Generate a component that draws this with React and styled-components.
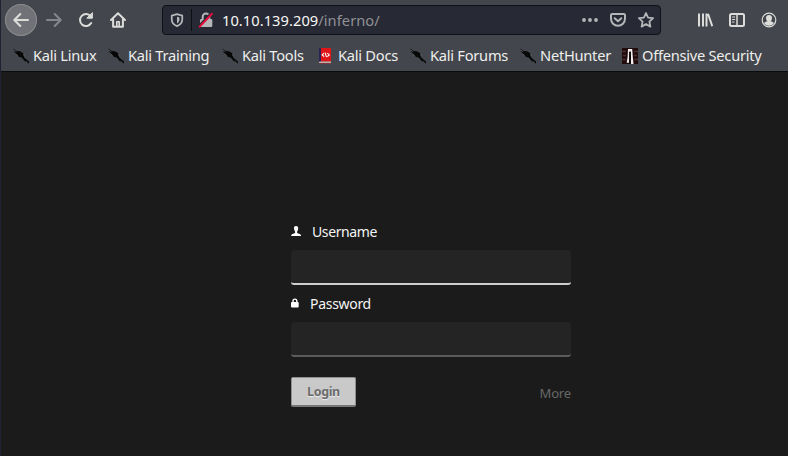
import React from "react";
import styled, { createGlobalStyle } from "styled-components";

const GlobalStyle = createGlobalStyle`
  * { box-sizing: border-box; }
  body { margin: 0; background: #1b1b1b; }
  button, input { font: inherit; }
`;
const Browser = styled.div`
  width: 788px;
  height: 456px;
  overflow: hidden;
  display: flex;
  flex-direction: column;
  background: #1b1b1b;
  border-left: 1px solid #1f2230;
  font-family: "Noto Sans", sans-serif;
  color: #eeeeec;
`;
const Toolbar = styled.header`
  height: 40px;
  flex: none;
  display: flex;
  align-items: center;
  background: #43464d;
  padding-left: 4px;
`;
const NavButton = styled.button`
  width: ${(p) => p.$w || 32}px;
  height: 32px;
  flex: none;
  padding: 0;
  border: 0;
  background: transparent;
  display: flex;
  align-items: center;
  justify-content: center;
  color: ${(p) => (p.$dim ? "#85878c" : "#dcdcd9")};
`;
const BackButton = styled(NavButton)`
  background: #717277;
  box-shadow: inset 0 0 0 1px #8a8a8d;
  border-radius: 50%;
`;
const AddressBar = styled.div`
  width: 499px;
  height: 30px;
  margin-left: 28px;
  flex: none;
  display: flex;
  align-items: center;
  background: #272935;
  border: 1px solid #101116;
  border-radius: 4px;
  color: #b5b6b8;
`;
const AddressIcon = styled.span`
  display: flex;
  justify-content: center;
  width: 28px;
`;
const Separator = styled.span`
  width: 1px;
  height: 22px;
  background: #0e0f15;
`;
const Url = styled.div`
  flex: 1;
  padding-left: 2px;
  font-size: 14.67px;
  line-height: 20px;
  letter-spacing: 0.05px;
  color: #909196;
`;
const Host = styled.span`
  color: #f8f8f5;
`;
const WindowTools = styled.div`
  display: flex;
  margin-left: 28px;
`;
const Bookmarks = styled.nav`
  height: 32px;
  flex: none;
  display: flex;
  background: #43464d;
  border-bottom: 1px solid #0b0b0d;
  padding-left: 12px;
`;
const Bookmark = styled.div`
  width: ${(p) => p.$w}px;
  flex: none;
  display: flex;
  align-items: center;
  gap: 4px;
  font-size: 14.67px;
  line-height: 20px;
  letter-spacing: -0.26px;
  white-space: nowrap;
  svg { flex: none; }
`;
const BookmarkName = styled.span`
  padding-bottom: 2px;
`;
const Page = styled.main`
  flex: 1;
  padding: 150px 0 0 290px;
`;
const LoginForm = styled.form`
  width: 280px;
`;
const Field = styled.label`
  display: block;
  height: 72px;
`;
const FieldLabel = styled.span`
  height: 28px;
  display: flex;
  align-items: flex-start;
  gap: ${(p) => p.$gap}px;
  font-size: 14px;
  line-height: 19px;
  letter-spacing: ${(p) => p.$spacing}px;
  color: #f4f4f4;
  svg { flex: none; margin-top: 4px; }
`;
const Input = styled.input`
  display: block;
  width: 280px;
  height: 35px;
  border: 0;
  outline: 0;
  border-bottom: 2px solid ${(p) => (p.$active ? "#d0cdd0" : "#5c5c5c")};
  border-radius: 3px;
  background: #242424;
`;
const Actions = styled.div`
  display: flex;
  justify-content: space-between;
  align-items: center;
  height: 30px;
  margin-top: 11px;
`;
const LoginButton = styled.button`
  width: 65px;
  height: 30px;
  padding: 0;
  background: #c9c9c9;
  border: 1px solid #8f8f8f;
  border-bottom: 2px solid #777;
  border-radius: 2px;
  color: #6c6c6c;
  font-size: 12.5px;
  font-weight: 700;
  letter-spacing: -0.35px;
  text-shadow: 0 1px 1px #eee;
`;
const More = styled.span`
  padding-top: 2px;
  font-size: 13px;
  line-height: 18px;
  letter-spacing: -0.15px;
  color: #686868;
`;

const Line = ({ size = 16, w = 2, children }) => (
  <svg width={size} height={size} viewBox="0 0 16 16" fill="none" stroke="currentColor" strokeWidth={w} strokeLinecap="round" strokeLinejoin="round">
    {children}
  </svg>
);
const ArrowLeft = () => <Line><path d="M15 8H1.5M7.3 2 1.3 8l6 6" /></Line>;
const ArrowRight = () => <Line><path d="M1 8h13.5M8.7 2l6 6-6 6" /></Line>;
const Reload = () => (
  <Line>
    <path d="M13.2 11.1A6 6 0 1 1 12.7 4.3" />
    <path d="M14.4 1v5.2H9.2z" fill="currentColor" strokeWidth="1" />
  </Line>
);
const Home = () => (
  <Line>
    <path d="M1 8 8 1.3 15 8M3.1 7.5V14.7h9.8V7.5" />
    <path d="M6.8 14V9.8h2.4V14" strokeWidth="1.6" />
  </Line>
);
const Shield = () => (
  <Line size={14}>
    <path d="M8 1.2 14 3v4.5c0 3.5-2.2 6-6 7.5-3.8-1.5-6-4-6-7.5V3z" />
    <path d="M8 4.4v7.5c1.8-1 2.8-2.5 2.8-4.5V5.1z" fill="currentColor" stroke="none" />
  </Line>
);
const InsecureLock = () => (
  <Line>
    <path d="M4.7 7.5V4.8a3.3 3.3 0 0 1 6.6 0v2.7" />
    <rect x="2" y="7" width="12.3" height="8" rx="1.2" fill="currentColor" stroke="none" />
    <path d="M1 13.8 13 1.3" stroke="#272935" strokeWidth="2" />
    <path d="M1.7 14.6 14 1.8" stroke="#e80b3d" />
  </Line>
);
const Dots = () => (
  <svg width="17" height="16" fill="currentColor"><circle cx="2" cy="8" r="1.9" /><circle cx="8" cy="8" r="1.9" /><circle cx="14" cy="8" r="1.9" /></svg>
);
const Pocket = () => (
  <Line><path d="M2.2 2h11.6q1.2 0 1.2 1.2v3.6a7 7 0 0 1-14 0V3.2Q1 2 2.2 2z" /><path d="m4.7 6.2 3.3 3 3.3-3" /></Line>
);
const Star = () => (
  <Line w={1.8}><path d="m8 1 2.1 4.6 5 .6-3.7 3.4 1 5L8 12.1l-4.4 2.5 1-5L.9 6.2l5-.6z" /></Line>
);
const Library = () => (
  <Line><path d="M2 1.5v13M6 1.5v13M9.5 1.5v13M11 1.8l4.3 12.4" strokeLinecap="butt" /></Line>
);
const Sidebar = () => (
  <Line><rect x="1" y="2" width="14" height="12" rx="1.5" /><path d="M8 2v12" strokeWidth="1.5" /><path d="M3.5 5h2.2M3.5 7.5h2.2M3.5 10h1.5" strokeWidth="1" /></Line>
);
const Account = () => (
  <Line w={1.2}>
    <circle cx="8" cy="8" r="6.8" />
    <path d="M8 3a3 3 0 0 0-3 3c0 1.6.7 2.7 1.5 3.2-1.6.4-3 1-3.4 1.8a5.7 5.7 0 0 0 9.8 0c-.4-.8-1.8-1.4-3.4-1.8C10.3 8.7 11 7.6 11 6a3 3 0 0 0-3-3z" fill="currentColor" stroke="none" />
  </Line>
);
const Kali = () => (
  <svg width="16" height="16" viewBox="0 0 16 16">
    <path d="M0 .5 4 3l3 .3 3.2 2 .8 4 2.2 2 2.8 2.2v2L11.5 13 9 9.8 5.2 8.6 3 5.5.5 3.2l1.8.3z" fill="#070708" />
    <path d="m1 2.2 2.5 1.6M3.2 6 5 8.4M10.8 6l.4 2M12.7 13.3l1.7 1" stroke="#68706a" strokeWidth=".6" fill="none" />
  </svg>
);
const Docs = () => (
  <svg width="16" height="16" viewBox="0 0 16 16">
    <path d="M1 0h12v13.5H1z" fill="#df1518" /><path d="M1 0h2v14H1z" fill="#2c2456" />
    <path d="M1.5 13.4H13v1.8H2q-1 0-1-1z" fill="#c9b9b5" /><path d="M1.5 15.4H13" stroke="#8b2025" strokeWidth=".7" />
    <path d="M6 5.2 4.2 6.9l2 1.7M9.3 5.2l2 1.7-2 1.7M7.1 4.7l1.4 4.4" stroke="#fff" strokeWidth="1.1" fill="none" />
  </svg>
);
const Offensive = () => (
  <svg width="16" height="16" viewBox="0 0 16 16">
    <path d="M0 0h16v16H0z" fill="#210c0d" />
    <path d="M0 3.5h4M12 3.5h4M1 7.5h3M12 7.5h3M0 11.5h4M12 11.5h4" stroke="#4d2e2f" strokeWidth="1.3" />
    <path d="M6 1h4.2l.6 8 .7 7H9L8.8 4H7.4L7 14.7H4.7L5.6 9z" fill="#f5eeee" />
    <path d="M7.3 3.4h1.5L9 16H7z" fill="#080506" />
  </svg>
);
const UserGlyph = () => (
  <svg width="11" height="12" viewBox="0 0 11 12" fill="#fff"><path d="M5 0C3.4 0 2.8 1 3 2.6c.1 1.3.5 2.2 1.1 2.8v1.5C2.5 7.6.2 7.6.2 10h9.9c0-2.4-2.5-2.4-4-3.1V5.4c.6-.6 1-1.5 1.1-2.8C7.3 1 6.6 0 5 0z" /></svg>
);
const LockGlyph = () => (
  <svg width="8" height="12" viewBox="0 0 8 12"><path d="M2 5V3a1.9 1.9 0 0 1 3.8 0v2" stroke="#fff" strokeWidth="1.4" fill="none" /><rect x="0" y="4" width="7.7" height="5.4" rx="1" fill="#fff" /></svg>
);

const bookmarks = [
  ["Kali Linux", 95, Kali],
  ["Kali Training", 114, Kali],
  ["Kali Tools", 96, Kali],
  ["Kali Docs", 92, Docs],
  ["Kali Forums", 110, Kali],
  ["NetHunter", 102, Kali],
  ["Offensive Security", 145, Offensive],
];

export default function App() {
  return (
    <Browser>
      <GlobalStyle />
      <Toolbar>
        <BackButton aria-label="Back"><ArrowLeft /></BackButton>
        <NavButton $dim $w={34} aria-label="Forward"><ArrowRight /></NavButton>
        <NavButton $w={30} aria-label="Reload"><Reload /></NavButton>
        <NavButton $w={33} aria-label="Home"><Home /></NavButton>
        <AddressBar>
          <AddressIcon><Shield /></AddressIcon>
          <Separator />
          <AddressIcon><InsecureLock /></AddressIcon>
          <Url><Host>10.10.139.209</Host>/inferno/</Url>
          <AddressIcon><Dots /></AddressIcon>
          <AddressIcon><Pocket /></AddressIcon>
          <AddressIcon><Star /></AddressIcon>
        </AddressBar>
        <WindowTools>
          <NavButton aria-label="Library"><Library /></NavButton>
          <NavButton aria-label="Sidebar"><Sidebar /></NavButton>
          <NavButton aria-label="Account"><Account /></NavButton>
        </WindowTools>
      </Toolbar>
      <Bookmarks>
        {bookmarks.map(([name, width, Icon]) => (
          <Bookmark key={name} $w={width}><Icon /><BookmarkName>{name}</BookmarkName></Bookmark>
        ))}
      </Bookmarks>
      <Page>
        <LoginForm>
          <Field>
            <FieldLabel $gap={10} $spacing={-0.4}><UserGlyph />Username</FieldLabel>
            <Input $active />
          </Field>
          <Field>
            <FieldLabel $gap={11} $spacing={-0.3}><LockGlyph />Password</FieldLabel>
            <Input type="password" />
          </Field>
          <Actions>
            <LoginButton type="button">Login</LoginButton>
            <More>More</More>
          </Actions>
        </LoginForm>
      </Page>
    </Browser>
  );
}
